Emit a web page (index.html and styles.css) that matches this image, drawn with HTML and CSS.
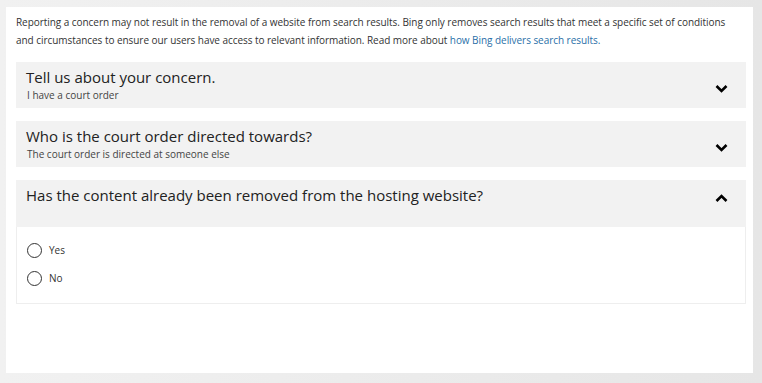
FILE: index.html
```html
<!DOCTYPE html>
<html>
<head>
    <meta charset="UTF-8">
    <title>Report a concern</title>
    <link rel="stylesheet" href="styles.css">
</head>
<body>
    <div class="panel">
        <p class="intro">Reporting a concern may not result in the removal of a website from search results. Bing only removes search results that meet a specific set of conditions and circumstances to ensure our users have access to relevant information. Read more about <a href="#">how Bing delivers search results.</a></p>

        <!-- question 1 -->
        <div class="question">
            <div class="question-head">
                <div class="question-text">
                    <h3>Tell us about your concern.</h3>
                    <span class="answer">I have a court order</span>
                </div>
                <svg class="chevron" width="13" height="9" viewBox="0 0 13 9"><path d="M1.5 2 L6.5 7 L11.5 2" fill="none" stroke="#000" stroke-width="2.6"/></svg>
            </div>
        </div>

        <!-- question 2 -->
        <div class="question">
            <div class="question-head">
                <div class="question-text">
                    <h3>Who is the court order directed towards?</h3>
                    <span class="answer">The court order is directed at someone else</span>
                </div>
                <svg class="chevron" width="13" height="9" viewBox="0 0 13 9"><path d="M1.5 2 L6.5 7 L11.5 2" fill="none" stroke="#000" stroke-width="2.6"/></svg>
            </div>
        </div>

        <!-- question 3 (open) -->
        <div class="question open">
            <div class="question-head">
                <div class="question-text">
                    <h3>Has the content already been removed from the hosting website?</h3>
                </div>
                <svg class="chevron" width="13" height="9" viewBox="0 0 13 9"><path d="M1.5 7 L6.5 2 L11.5 7" fill="none" stroke="#000" stroke-width="2.6"/></svg>
            </div>
            <div class="question-body">
                <label class="radio"><span class="circle"></span>Yes</label>
                <label class="radio"><span class="circle"></span>No</label>
            </div>
        </div>
    </div>
</body>
</html>
```

FILE: styles.css
```css
* {
    margin: 0;
    padding: 0;
    box-sizing: border-box;
}

body {
    background: linear-gradient(to right, #f1f1f1, #e6e6e6);
    font-family: 'Open Sans', sans-serif;
    color: #222;
    height: 383px;
    padding: 7px 9px 10px 6px;
}

.panel {
    background-color: #fff;
    height: 366px;
    padding: 6px 7px 0 10px;
}

.intro {
    max-width: 716px;
    font-size: 10px;
    letter-spacing: -0.05px;
    line-height: 18px;
    color: #333;
    margin-bottom: 13px;
}

.intro a {
    color: #2a6fa8;
    text-decoration: none;
}

.question {
    margin-bottom: 13px;
}

.question-head {
    background-color: #f2f2f2;
    height: 46px;
    display: flex;
    align-items: flex-start;
    justify-content: space-between;
    padding: 6px 18px 0 10px;
}

.question.open .question-head {
    height: 47px;
}

.question-text h3 {
    font-size: 15px;
    font-weight: normal;
    line-height: 19px;
    color: #222;
}

.answer {
    display: block;
    font-size: 10px;
    line-height: 13px;
    margin-top: 2px;
    color: #444;
    padding-left: 1px;
}

.chevron {
    margin-top: 16px;
}

.question.open .chevron {
    margin-top: 8px;
}

.question-body {
    border: 1px solid #eee;
    border-top: none;
    height: 77px;
    padding: 16px 10px 0 10px;
}

.radio {
    display: flex;
    align-items: center;
    font-size: 10px;
    color: #333;
    height: 14px;
    margin-bottom: 14px;
}

.radio .circle {
    width: 15px;
    height: 15px;
    border: 1px solid #333;
    border-radius: 50%;
    margin-right: 7px;
}
```
